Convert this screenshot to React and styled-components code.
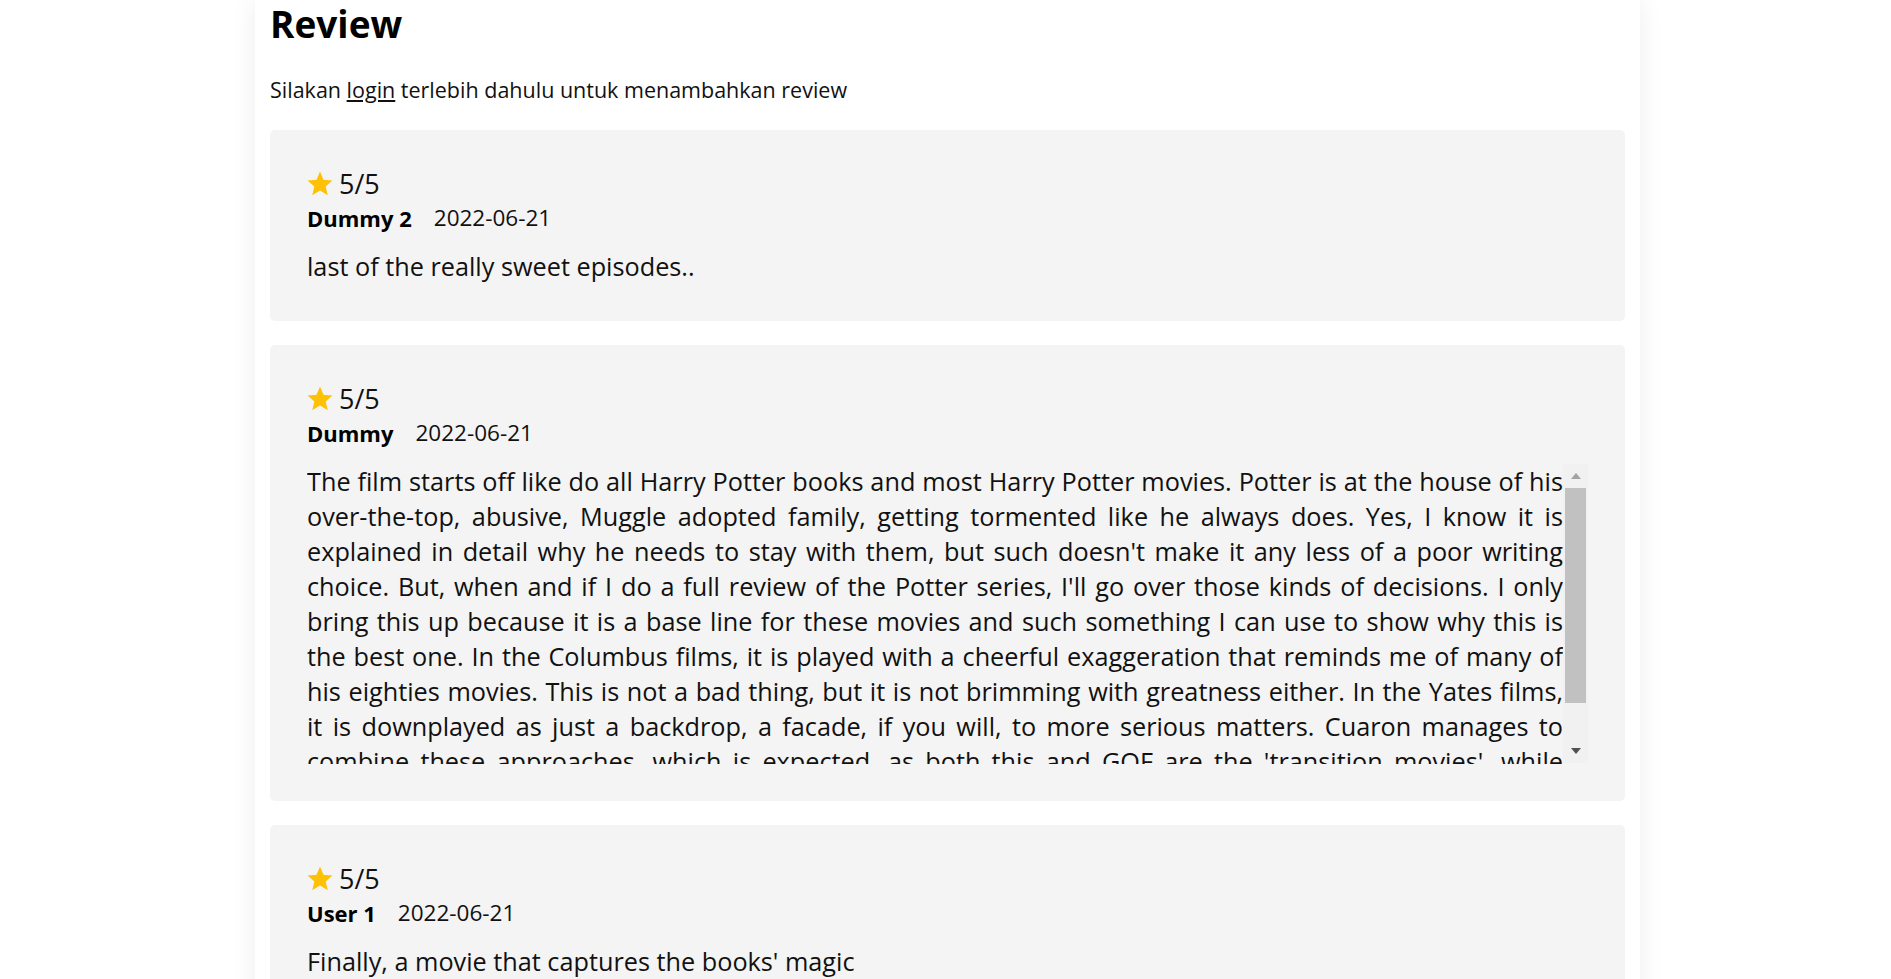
import React from 'react';
import styled, { createGlobalStyle } from 'styled-components';
import { MdStar } from 'react-icons/md';

const GlobalStyle = createGlobalStyle`
  body {
    margin: 0;
    background: #fff;
    font-family: "Open Sans", "Liberation Sans", sans-serif;
    color: #111;
  }
`;

const Page = styled.div`
  width: 1385px;
  min-height: 100vh;
  margin-left: calc((100% - 1385px) / 2 + 2px);
  padding: 0 15px;
  box-sizing: border-box;
  background: #fff;
  box-shadow: 0 0 24px rgba(0, 0, 0, 0.07);
`;

const Title = styled.h2`
  margin: 0;
  padding-top: 2px;
  font-size: 37px;
  line-height: 43px;
  font-weight: 700;
  color: #000;
`;

const LoginNote = styled.p`
  margin: 29px 0 24px;
  font-size: 21.5px;
  line-height: 32px;

  a {
    color: inherit;
    text-decoration: underline;
  }
`;

const List = styled.div`
  display: flex;
  flex-direction: column;
  gap: 24px;
`;

const Card = styled.div`
  background: #f4f4f4;
  border-radius: 5px;
  padding: 36px 37px 37px;
`;

const Rating = styled.div`
  display: flex;
  align-items: center;
  gap: 4px;
  font-size: 27px;
  line-height: 36px;

  svg {
    color: #ffc107;
    margin-left: -2px;
  }
`;

const Meta = styled.div`
  display: flex;
  gap: 22px;
  font-size: 22.5px;
  line-height: 32px;
`;

const Author = styled.span`
  font-weight: 700;
  font-size: 22px;
  color: #000;
`;

const BodyRow = styled.div`
  display: flex;
  margin-top: 15px;
`;

const Body = styled.p`
  flex: 1;
  margin: 0;
  font-size: 25.25px;
  line-height: 35px;
  text-align: justify;
  max-height: 300px;
  overflow: hidden;
`;

const Scrollbar = styled.div`
  width: 25px;
  height: 299px;
  flex: none;
  display: flex;
  flex-direction: column;
  background: #f1f1f1;
`;

const ArrowButton = styled.div`
  height: 24px;
  flex: none;
  display: flex;
  justify-content: center;
  align-items: ${(p) => (p.$down ? 'flex-start' : 'flex-end')};
  padding: ${(p) => (p.$down ? '9px 0 0' : '0 0 9px')};
  box-sizing: border-box;

  &::after {
    content: '';
    border-left: 5.5px solid transparent;
    border-right: 5.5px solid transparent;
    ${(p) =>
      p.$down
        ? 'border-top: 6px solid #505050;'
        : 'border-bottom: 6px solid #a3a3a3;'}
  }
`;

const Track = styled.div`
  flex: 1;
  padding: 0 2px;
`;

const Thumb = styled.div`
  background: #c1c1c1;
`;

const reviews = [
  {
    id: 1,
    name: 'Dummy 2',
    date: '2022-06-21',
    rating: 5,
    text: 'last of the really sweet episodes..',
  },
  {
    id: 2,
    name: 'Dummy',
    date: '2022-06-21',
    rating: 5,
    thumb: 215,
    text:
      "The film starts off like do all Harry Potter books and most Harry Potter movies. Potter is at the house of his over-the-top, abusive, Muggle adopted family, getting tormented like he always does. Yes, I know it is explained in detail why he needs to stay with them, but such doesn't make it any less of a poor writing choice. But, when and if I do a full review of the Potter series, I'll go over those kinds of decisions. I only bring this up because it is a base line for these movies and such something I can use to show why this is the best one. In the Columbus films, it is played with a cheerful exaggeration that reminds me of many of his eighties movies. This is not a bad thing, but it is not brimming with greatness either. In the Yates films, it is downplayed as just a backdrop, a facade, if you will, to more serious matters. Cuaron manages to combine these approaches, which is expected, as both this and GOF are the 'transition movies', while Prisoner of Azkaban keeps the whimsy of the earlier films alive.",
  },
  {
    id: 3,
    name: 'User 1',
    date: '2022-06-21',
    rating: 5,
    text: "Finally, a movie that captures the books' magic",
  },
];

export default function App() {
  return (
    <>
      <GlobalStyle />
      <Page>
        <Title>Review</Title>
        <LoginNote>
          Silakan <a href="#login">login</a> terlebih dahulu untuk menambahkan review
        </LoginNote>
        <List>
          {reviews.map((r) => (
            <Card key={r.id}>
              <Rating>
                <MdStar size={30} />
                <span>{r.rating}/5</span>
              </Rating>
              <Meta>
                <Author>{r.name}</Author>
                <span>{r.date}</span>
              </Meta>
              <BodyRow>
                <Body>{r.text}</Body>
                {r.thumb && (
                  <Scrollbar>
                    <ArrowButton />
                    <Track>
                      <Thumb style={{ height: r.thumb }} />
                    </Track>
                    <ArrowButton $down />
                  </Scrollbar>
                )}
              </BodyRow>
            </Card>
          ))}
        </List>
      </Page>
    </>
  );
}
